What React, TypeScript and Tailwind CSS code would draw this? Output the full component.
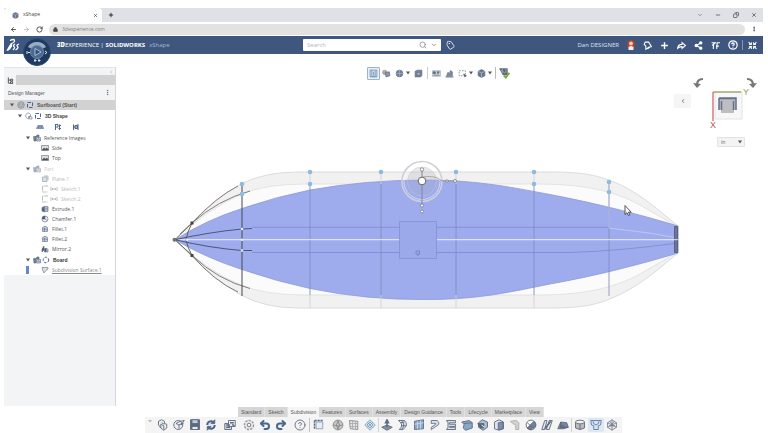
import type { ReactNode } from 'react'
import {
  ArrowLeft,
  ArrowRight,
  ChevronDown,
  ChevronLeft,
  CircleHelp,
  Copy,
  EllipsisVertical,
  Lock,
  Minus,
  Plus,
  Redo2,
  RotateCw,
  Search,
  Share2,
  Tag,
  Undo2,
  X,
} from 'lucide-react'

type Row = {
  label: string
  indent: string
  icons: string[]
  caret?: boolean
  tone?: string
  active?: boolean
  marker?: boolean
}

const TREE: Row[][] = [
  [{ label: 'Surfboard (Start)', indent: 'pl-1', icons: ['product', 'frame'], caret: true, tone: "font-bold font-['Liberation_Sans',sans-serif] text-[#555]", active: true }],
  [{ label: '3D Shape', indent: 'pl-3', icons: ['shape', 'frame'], caret: true, tone: "font-bold font-['Liberation_Sans',sans-serif] text-[#444]" }],
  [
    { label: 'Reference Images', indent: 'pl-5', icons: ['folder'], caret: true },
    { label: 'Side', indent: 'pl-7', icons: ['image'] },
    { label: 'Top', indent: 'pl-7', icons: ['image'] },
  ],
  [
    { label: 'Part', indent: 'pl-5', icons: ['folder'], caret: true, tone: 'text-[#aaa] opacity-60' },
    { label: 'Plane.1', indent: 'pl-7', icons: ['plane'], tone: 'text-[#999] opacity-70' },
    { label: 'Sketch.1', indent: 'pl-7', icons: ['sketch', 'hidden'], tone: 'text-[#999] opacity-70' },
    { label: 'Sketch.2', indent: 'pl-7', icons: ['sketch', 'hidden'], tone: 'text-[#999] opacity-70' },
    { label: 'Extrude.1', indent: 'pl-7', icons: ['extrude'] },
    { label: 'Chamfer.1', indent: 'pl-7', icons: ['chamfer'] },
    { label: 'Fillet.1', indent: 'pl-7', icons: ['fillet'] },
    { label: 'Fillet.2', indent: 'pl-7', icons: ['fillet'] },
    { label: 'Mirror.2', indent: 'pl-7', icons: ['mirror'] },
  ],
  [
    { label: 'Board', indent: 'pl-5', icons: ['folder', 'dashed'], caret: true, tone: "font-bold font-['Liberation_Sans',sans-serif] text-[#333]" },
    { label: 'Subdivision Surface.1', indent: 'pl-7', icons: ['subd'], tone: 'text-[#8a8a8a] underline', marker: true },
  ],
]

const TABS = [
  'Standard',
  'Sketch',
  'Subdivision',
  'Features',
  'Surfaces',
  'Assembly',
  'Design Guidance',
  'Tools',
  'Lifecycle',
  'Marketplace',
  'View',
]

// '|' and '.' are dividers, ' ' only a gap
const COMMANDS = [
  'new', 'open', 'save', 'sync', ' ', 'import', ' ', 'settings', 'undo', 'redo', ' ', 'help', '|',
  'box', ' ', 'sphere', 'cage', 'quad', '.', 'extrudeUp', 'bend', 'face', 'fillhole', 'bridge', 'thicken',
  'cubeCut', 'insert', 'crease', 'symmetry', 'offset', 'split', '.', 'cylinder', 'boxmode', 'mesh',
]

const GLYPHS: Record<string, ReactNode> = {
  product: <><circle cx="8" cy="8" r="6.5" /><path d="M8 4l4 2v4l-4 2-4-2V6zM8 8v4M4 6l4 2 4-2" strokeWidth=".8" /></>,
  frame: <path d="M3 3h10v10H3zM6 3h4M6 13h4" stroke="#47659a" strokeWidth="2" strokeDasharray="7 3" />,
  dashed: <circle cx="8" cy="8" r="5.5" stroke="#47659a" strokeWidth="2" strokeDasharray="5 2.5" />,
  shape: <><path d="M5 2a6 6 0 0 0 0 11l2 1V9h4V5a6 6 0 0 0-6-3z" /><path d="M9 9l5 1v4H9z" /></>,
  folder: <><path d="M1 5h5l2-3h4v4H6v8H2z" fill="#6f7f95" /><path d="M7 7h8v7H7z" fill="#c5d2e2" /><path d="M9 12l2-3 2 3" /></>,
  image: <><path d="M1 3h14v10H1z" fill="#ddd" /><path d="M2 12l4-4 3 2 3-2 3 4z" fill="#444" /></>,
  plane: <><path d="M3 4h9v9H3z" fill="#c5d2e2" /><path d="M6 2h8v9" /></>,
  sketch: <path d="M14 2H3v12h11" strokeDasharray="9 2" />,
  hidden: <path d="M2 4v8M14 4v8M5 8h6M6 6l-2 2 2 2M10 6l2 2-2 2" />,
  extrude: <><path d="M2 5l5-2v11l-5-2z" fill="#516178" /><path d="M7 3h7v10H7z" fill="#b0bfd4" /><path d="M9 8h5" /></>,
  chamfer: <><circle cx="8" cy="8" r="6" fill="#eee" /><path d="M8 8V2a6 6 0 0 0-6 6z" fill="#4b5b74" /><path d="M8 8l4 3" /></>,
  fillet: <><path d="M3 5q5-5 10 0v8H3z" fill="#c3cedd" /><path d="M3 8h7M7 6v7M10 9h3" /></>,
  mirror: <><path d="M2 14V8l4-6v8zM7 14h3V7H7z" fill="#4b5b74" /><path d="M11 6l3 3v5h-3z" fill="#b9c9de" /></>,
  subd: <path d="M2 3h12v3l-4 3-4 5-2-4z" fill="#ddd" />,
  new: <><path d="M2 3l4-2 4 2v3l3 1v5l-4 3-4-3-3-4z" fill="#eceff3" /><path d="M6 5l4 2M5 12V7l4 2v5" /></>,
  open: <><circle cx="7" cy="8" r="6" fill="#eceff3" /><path d="M4 6l4 2v5M8 8l5-3 2-3-5 1-6 3" /><path d="M10 8l4-2" /></>,
  save: <><path d="M2 1h12v13H2z" fill="#5c6980" /><path d="M4 1h8v5H4z" fill="#bccde2" /><path d="M4 10h8v4H4z" fill="#e7ebf0" /></>,
  sync: <><path d="M3 3h10v10H3z" fill="#dfe6ee" stroke="none" /><path d="M3 8a5 5 0 0 1 9-3M13 8a5 5 0 0 1-9 3" stroke="#466489" strokeWidth="2.5" /><path d="M13 1v5H8zM3 15v-5h5z" fill="#466489" /></>,
  import: <><path d="M1 6h9v8H1z" fill="#cfd8e2" /><path d="M6 2h9v8H6z" fill="#eceff3" /><path d="M3 8h5M3 11h5M8 5h5M11 7l3 3" strokeWidth="2" /></>,
  settings: <><circle cx="8" cy="8" r="6" strokeDasharray="3 1.5" strokeWidth="2" stroke="#999" /><circle cx="8" cy="8" r="2.5" /></>,
  box: <><path d="M4 4h9v9H4z" fill="#e4ecf5" stroke="#8b9cb3" /><path d="M2 2v12M2 2h12" strokeWidth="2" strokeDasharray="3 1" /></>,
  sphere: <><circle cx="8" cy="8" r="6.5" fill="#c8c8c8" stroke="#888" /><path d="M2 8q6 3 12 0M8 2q-4 6 0 12M8 2q4 6 0 12" stroke="#888" /></>,
  cage: <><path d="M2 2l11 1v11L3 13z" fill="#e5e5e5" stroke="#888" /><path d="M6 2v11M10 3v10M2 6h11M3 10h10" stroke="#aaa" /></>,
  quad: <path d="M8 1l7 7-7 7-7-7zM4.500 4.500l7 7M11.500 4.500l-7 7M8 4l4 4-4 4-4-4z" fill="#cfe0f0" stroke="#6d8cab" strokeWidth=".9" />,
  extrudeUp: <><path d="M1 11l7-3 7 3-7 4z" fill="#8192aa" /><path d="M8 11V2M6 5l2-4 2 4z" strokeWidth="2" /></>,
  bend: <path d="M2 2h8q6 6-2 12H3q7-6-1-12zM6 2q6 6 0 12M10 4l-5 1M12 9H6" fill="#dfe8f2" />,
  face: <><path d="M2 3l12-2v12L2 14z" fill="#8fa8ca" /><path d="M6 3v10M10 2v11M2 7l12-2" stroke="#c9d7e9" /></>,
  fillhole: <path d="M3 2h8q5 5-2 8l-6 4v-3l6-4q2-2-6-1z" fill="#dfe5ed" />,
  bridge: <path d="M2 2h12v3H6v2h8v3H6v1h8v3H2l2-3V5z" fill="#d5dde7" />,
  thicken: <><path d="M1 4l10-2 4 3v7l-9 3-3-3 1-5z" fill="#8ba5c9" /><path d="M4 6l11-1" /></>,
  cubeCut: <><path d="M2 5l5-4 7 3v7l-6 4-6-4z" fill="#a9bdd6" /><path d="M1 6h8v6H4z" fill="#596679" /><path d="M6 8l4 3" stroke="#fff" /></>,
  insert: <><path d="M2 4l6-3 6 3v9l-6 2-6-2z" fill="#dfe5ec" /><path d="M7 5l6-1v9l-6 1z" fill="#7790b4" /></>,
  crease: <path d="M2 3l8-1 3 3v9h-4V8L5 6z" fill="#d3d3d3" stroke="#aaa" />,
  symmetry: <><circle cx="8" cy="8" r="6.5" fill="#fff" /><path d="M3 12L12 3q4 4 1 8zM3 12q4 3 6 2l2-5z" fill="#6f83a2" /><path d="M3 5l9 8" /></>,
  offset: <><path d="M5 2h3L5 14H1zM11 2h4l-4 12H7z" fill="#dfe6ee" /><path d="M13 3L5 13" strokeWidth="2" /></>,
  split: <><path d="M1 13l4-9 8 1 2 6-6 2z" fill="#7389aa" /><path d="M5 4v7l10 0M4 12l5-4" strokeWidth="2" /></>,
  cylinder: <><path d="M2 4v8q6 4 12 0V4" fill="#bbb" /><ellipse cx="8" cy="4" rx="6" ry="2.500" fill="#eee" /><path d="M8 7v7" /></>,
  boxmode: <><path d="M1 2h14l-1 6-3 1v5H5V9L2 8z" fill="#d6e5f4" stroke="#5a7da3" /><path d="M4 3q0 4 4 5 4-1 4-5" stroke="#5a7da3" /></>,
  mesh: <path d="M8 1l6 4v6l-6 4-6-4V5zM8 1v14M2 5l12 6M14 5L2 11M5 3l3 4 3-4M4 9h8" fill="#e5e5e5" strokeWidth=".9" />,
  planeV: <path d="M2 2h12v12H2zM5 3v10M8 5v6M11 3v10M5 13h6" fill="#dbe8f5" stroke="#55799d" />,
  layers: <><circle cx="5" cy="6" r="4" fill="#aaa" stroke="#999" /><path d="M6 6l7-1 1 7-7 2z" fill="#8a94a3" /></>,
  globe: <><circle cx="8" cy="8" r="6" fill="#71839c" /><path d="M8 2v12M2 8h12" stroke="#a5b3c6" /></>,
  solid: <><path d="M2 4l4-2h8v10l-3 2H2z" fill="#73849d" /><path d="M5 6h6v5H5z" fill="#a9b7c9" /></>,
  grid: <><path d="M1 3h14v10H1z" fill="#c9d0d8" stroke="#aab" /><path d="M2 5h4v3H2zM9 5h4l-3 4M3 11h10" fill="#54657c" /></>,
  measure: <><path d="M3 12l2-6 4 2V3l4 2v7z" fill="#7d8ca3" /><path d="M1 14h14" strokeWidth="2" /></>,
  select: <><path d="M2 3h11v9H2z" strokeDasharray="3 2" /><path d="M10 9l5 3-3 2z" fill="#555" /></>,
  cube: <><path d="M2 4l6-3 6 3v8l-6 3-6-3z" fill="#66778f" /><path d="M2 4l6 3 6-3M8 7v8" stroke="#b8c6d7" /></>,
  check: <><path d="M1 1h11v9H6z" fill="#59677b" /><path d="M3 3l6 5M5 1v6M10 1v6" stroke="#a4afbe" /><path d="M7 11l3 3 5-7" stroke="#76a82a" strokeWidth="2.500" /></>,
  plane1: <><path d="M1 11l3-6h9l2 6z" fill="#94abc9" stroke="#4e6788" /><path d="M5 6v4M8 6v4M11 6v4" /></>,
  plane2: <path d="M3 2v12M3 3h5v5H3M11 3v11M9 11h5M10 5h4" stroke="#4e6788" strokeWidth="2" />,
  plane3: <path d="M3 3v11M12 2v12M3 8h9M6 5h5v6H6z" stroke="#4e6788" strokeWidth="2" />,
}

function Glyph({ name, className = 'size-2' }: { name: string; className?: string }) {
  if (name === 'undo') return <Undo2 className={className} stroke="#46688e" strokeWidth={4} />
  if (name === 'redo') return <Redo2 className={className} stroke="#46688e" strokeWidth={4} />
  if (name === 'help') return <CircleHelp className={className} stroke="#6b7a8c" strokeWidth={2} />
  return (
    <svg viewBox="0 0 16 16" className={className + ' shrink-0'} fill="none" stroke="#606c7c" strokeWidth="1.2" aria-hidden="true">
      {GLYPHS[name]}
    </svg>
  )
}

function Caret({ className = '' }: { className?: string }) {
  return (
    <svg viewBox="0 0 8 8" className={'size-1 shrink-0 ' + className} fill="#555" aria-hidden="true">
      <path d="M0 1h8L4 7z" />
    </svg>
  )
}

function BrowserChrome() {
  return (
    <>
      <div className="flex h-[14px] items-stretch bg-[#dee1e6]">
        <div className="flex w-[98px] items-center rounded-t bg-white pr-1 pl-2 text-[5px] text-[#444]">
          <Glyph name="cube" className="mr-1 size-[7px]" />
          <span className="flex-1">xShape</span>
          <button type="button" aria-label="Close tab">
            <X className="size-[5px]" strokeWidth={3} />
          </button>
        </div>
        <button type="button" aria-label="New tab" className="ml-1.5">
          <Plus className="size-[6px]" strokeWidth={3} />
        </button>
        <div className="ml-auto flex items-center gap-3 pr-1.5 text-[#555]">
          <button type="button" aria-label="Search tabs"><ChevronDown className="size-[6px]" /></button>
          <button type="button" aria-label="Minimize"><Minus className="size-[6px]" strokeWidth={3} /></button>
          <button type="button" aria-label="Restore"><Copy className="size-[6px] -scale-x-100" strokeWidth={3} /></button>
          <button type="button" aria-label="Close"><X className="size-[6px]" strokeWidth={3} /></button>
        </div>
      </div>
      <div className="flex h-[14px] items-center gap-1.5 pr-1.5 pl-1.5 text-[#444]">
        <button type="button" aria-label="Back"><ArrowLeft className="size-[7px]" strokeWidth={3} /></button>
        <button type="button" aria-label="Forward" className="text-[#bbb]"><ArrowRight className="size-[7px]" strokeWidth={3} /></button>
        <button type="button" aria-label="Reload"><RotateCw className="size-[7px]" strokeWidth={3} /></button>
        <div className="flex h-[11px] flex-1 items-center gap-1 rounded-full bg-[#e2e2e3] px-1">
          <Lock className="size-[5px]" fill="#444" strokeWidth={3} />
          <input
            aria-label="Address"
            defaultValue="3dexperience.com"
            className="flex-1 bg-transparent text-[5px] leading-[8px] text-[#7d7d7d] outline-none"
          />
        </div>
        <button type="button" aria-label="Browser menu"><EllipsisVertical className="size-[6px]" strokeWidth={3} /></button>
      </div>
    </>
  )
}

function Compass() {
  return (
    <button type="button" aria-label="Compass" className="absolute top-0.5 left-[19px] z-10">
      <svg viewBox="0 0 28 28" className="size-7">
        <circle cx="14" cy="14" r="13.5" fill="#1f3a5f" stroke="#2c4d79" />
        <path d="M5 9a10.500 10.500 0 0 1 18 0l-4 2a6 6 0 0 0-10 0z" fill="#8398b5" />
        <path d="M5 9a10.500 10.500 0 0 1 18 0l-3 1q-6-5-12 0z" fill="#b5c1d1" opacity=".5" />
        <circle cx="14" cy="14" r="6.5" fill="#4b6b94" stroke="#6e89ab" />
        <path d="M12 10.500l6 3.500-6 3.500z" fill="#2e4c75" stroke="#c7d3e2" strokeWidth=".8" />
        <path d="M4 13v3M5 14.500h2M22 13l2 1.500-2 1.500M11 22.500h2.500M15 22.500h2.500M12 21v3M16 21v3" stroke="#dfe7f1" fill="none" />
      </svg>
    </button>
  )
}

function Header() {
  return (
    <header className="relative flex h-[18px] items-center bg-[#3f577f] text-[6px] leading-[8px] text-white">
      <a href="#home" aria-label="Home" className="ml-0.5">
        <svg viewBox="0 0 26 28" className="size-[14px]" fill="none" stroke="#fff" strokeWidth="2.600">
          <path d="M7 5q8-4 9 0t-8 7M2 24q8-15 8-10t-7 10zM17 12q-5 3-2 5t-2 7M25 12q-6 2-3 5t-4 7" />
        </svg>
      </a>
      <Compass />
      <div className="ml-[37px] flex gap-1">
        <span><b className="font-black">3D</b>EXPERIENCE | <b>SOLIDWORKS</b></span>
        <span className="text-[#a9b9d2]">xShape</span>
      </div>
      <form role="search" className="absolute left-[299px] flex h-3 w-[138px] items-center rounded-[1px] bg-white pr-1 pl-1">
        <input aria-label="Search" placeholder="Search" className="min-w-0 flex-1 text-[#555] outline-none placeholder:text-[#b5b5b5]" />
        <button type="button" aria-label="Run search"><Search className="size-2 text-[#777]" /></button>
        <button type="button" aria-label="Search options" className="ml-1"><ChevronDown className="size-[6px] text-[#777]" strokeWidth={3} /></button>
      </form>
      <button type="button" aria-label="Tags" className="absolute left-[442px]">
        <Tag className="size-[9px] rotate-12" strokeWidth={2} />
      </button>
      <div className="ml-auto flex items-center pr-0.5">
        <span className="mr-1 text-[#dce4f0]">Dan DESIGNER</span>
        <button type="button" aria-label="Profile" className="flex w-4 justify-center">
          <svg viewBox="0 0 16 20" className="h-[10px] w-2">
            <path d="M1 4q7-8 14 0v12H1z" fill="#b8432c" />
            <circle cx="8" cy="7" r="4" fill="#f4c7a5" />
            <path d="M3 20v-6q5-4 10 0v6z" fill="#eee" />
          </svg>
        </button>
        <HeaderButton label="Notifications"><path d="M4 2h6l5 8-5 1-5 4V9L2 6zM8 14l6-4" /></HeaderButton>
        <HeaderButton label="Add"><path d="M8 2v12M2 8h12" strokeWidth="2.500" /></HeaderButton>
        <HeaderButton label="Share"><path d="M1 13q1-7 8-7V3l6 5-6 5v-3q-5 0-8 3z" /></HeaderButton>
        <button type="button" aria-label="Collaborate" className="flex w-[17px] justify-center"><Share2 className="size-[9px]" fill="#fff" strokeWidth={3} /></button>
        <HeaderButton label="Content"><path d="M1 3h8M5 3l-1 11M10 14l1-11h5M9 9h5M2 8l6-5" strokeWidth="2" /></HeaderButton>
        <button type="button" aria-label="Help" className="flex w-[17px] justify-center"><CircleHelp className="size-[10px]" strokeWidth={3} /></button>
        <span className="mx-px h-[10px] w-px bg-[#8194b2]" />
        <HeaderButton label="Exit full screen">
          <path d="M1 2l4 4M15 2l-4 4M1 14l4-4M15 14l-4-4M6 2v4H2M10 2v4h4M6 14v-4H2M10 14v-4h4" />
        </HeaderButton>
      </div>
    </header>
  )
}

function HeaderButton({ label, children }: { label: string; children: ReactNode }) {
  return (
    <button type="button" aria-label={label} className="flex w-[17px] justify-center">
      <svg viewBox="0 0 16 16" className="size-[9px]" fill="none" stroke="#fff" strokeWidth="1.8">
        {children}
      </svg>
    </button>
  )
}

function TreeRow({ row }: { row: Row }) {
  return (
    <button
      type="button"
      className={
        'relative flex h-[10px] w-full items-center gap-px whitespace-nowrap ' +
        row.indent + ' ' + (row.active ? 'bg-[#d2d2d2] ' : '')
      }
    >
      {row.marker ? <span className="absolute top-px left-[22px] h-2 w-[3px] bg-[#6a86c4]" /> : null}
      <span className="flex w-2 shrink-0 justify-center">{row.caret ? <Caret /> : null}</span>
      <span className={'flex items-center gap-px ' + (row.tone ?? 'text-[#555]')}>
        {row.icons.map((name) => (
          <Glyph key={name} name={name} />
        ))}
        <span className="ml-0.5">{row.label}</span>
      </span>
    </button>
  )
}

function DesignManager() {
  return (
    <aside className="mt-[13px] flex w-28 shrink-0 flex-col border-r border-[#d5d7da] bg-[#f3f4f6] text-[5px] leading-[8px]">
      <div className="flex h-2 items-center justify-end border-t border-[#e4e4e4] pr-0.5">
        <ChevronLeft className="size-[4px] text-[#777]" />
      </div>
      <div className="flex h-[10px] bg-[#d2d2d2]">
        <button type="button" aria-label="Tree" className="flex w-3 items-center justify-center bg-[#f3f4f6]">
          <svg viewBox="0 0 16 16" className="size-[7px]" fill="none" stroke="#444" strokeWidth="2">
            <path d="M3 1v13h5M3 7h4M8 5h5v4H8zM8 11h5v4H8z" />
          </svg>
        </button>
      </div>
      <div className="flex h-[15px] items-center justify-between pr-1 pl-1 text-[#555]">
        <h2 className="font-['Liberation_Sans',sans-serif]">Design Manager</h2>
        <button type="button" aria-label="Panel menu"><EllipsisVertical className="size-[7px]" /></button>
      </div>
      <div className="flex flex-col gap-px bg-white">
        {TREE.map((group, i) => (
          <div key={group[0].label}>
            {group.map((row) => (
              <TreeRow key={row.label} row={row} />
            ))}
            {i === 1 ? (
              <div className="flex h-[11px] items-center gap-[10px] pl-8">
                <Glyph name="plane1" />
                <Glyph name="plane2" />
                <Glyph name="plane3" />
              </div>
            ) : null}
          </div>
        ))}
      </div>
    </aside>
  )
}

function ViewToolbar() {
  return (
    <div className="flex h-[14px] items-center justify-center">
      <button type="button" aria-label="Section" className="flex size-[13px] items-center justify-center rounded-[1px] border border-[#9fb4c8] bg-[#e6eef6]">
        <Glyph name="planeV" className="size-[9px]" />
      </button>
      <Tool name="layers" label="Appearance" />
      <Tool name="globe" label="Ambience" caret />
      <Tool name="solid" label="Display mode" />
      <span className="mx-0.5 h-3 w-px bg-[#ccc]" />
      <Tool name="grid" label="Grid" />
      <Tool name="measure" label="Measure" />
      <Tool name="select" label="Selection" caret />
      <Tool name="cube" label="Views" caret />
      <span className="mx-px h-3 w-px bg-[#bbb]" />
      <Tool name="check" label="Validate" />
    </div>
  )
}

function Tool({ name, label, caret }: { name: string; label: string; caret?: boolean }) {
  return (
    <button type="button" aria-label={label} className="flex items-center px-0.5">
      <Glyph name={name} className={name === 'check' ? 'size-[11px]' : 'size-[9px]'} />
      {caret ? <Caret className="ml-0.5" /> : null}
    </button>
  )
}

function ViewCube() {
  return (
    <div className="absolute top-5 right-0 flex items-start">
      <button type="button" aria-label="Collapse view tools" className="mt-5 flex h-[14px] w-[17px] items-center justify-center rounded-[1px] bg-[#f5f5f5]">
        <ChevronLeft className="size-[6px] text-[#555]" strokeWidth={3} />
      </button>
      <div className="flex w-[72px] flex-col items-center">
        <svg viewBox="0 0 72 60" className="h-[60px] w-[72px]" fill="none">
          <path d="M12 5q-6 0-6 6" stroke="#777" strokeWidth="2.200" />
          <path d="M2 9l4 5 4-4z" fill="#777" />
          <path d="M56 5q6 0 6 6" stroke="#777" strokeWidth="2.200" />
          <path d="M58 10l4 4 4-5z" fill="#777" />
          <path d="M24 18h27v27H24z" fill="#f7f7f7" stroke="#e3e3e3" />
          <path d="M28 24h17v12h-2v3H30v-3h-2z" fill="#bdbdc2" />
          <path d="M28 24h17v12M28 24v12M28 24.500h17M30.500 27v9M42.500 27v9" stroke="#63718a" strokeWidth="1.500" />
          <path d="M22 18h28" stroke="#8f9a55" strokeWidth="1.200" />
          <path d="M22 18v29" stroke="#c45d60" strokeWidth="1.200" />
          <text x="52" y="21" fill="#9a9a50" fontSize="9" fontFamily="Liberation Sans">Y</text>
          <text x="19" y="54" fill="#b8565a" fontSize="9" fontFamily="Liberation Sans">X</text>
        </svg>
        <div className="relative mt-[3px] ml-2 flex">
          <select aria-label="Units" defaultValue="in" className="h-[10px] w-7 appearance-none rounded-[1px] border border-[#e3e3e3] bg-[#f3f3f3] pl-[3px] text-[5px] leading-[8px] text-[#666]">
            <option>in</option>
            <option>mm</option>
          </select>
          <Caret className="pointer-events-none absolute top-[3px] right-[3px]" />
        </div>
      </div>
    </div>
  )
}

const STATIONS = [310, 381, 456, 534, 609]
const CONTROL_POINTS = [
  [242, 184], [242, 194], [310, 172], [310, 184], [381, 172],
  [456, 172], [534, 172], [534, 184], [609, 182], [609, 192],
]

// everything in the model is mirrored about y = 239.7
function Board() {
  return (
    <svg viewBox="116 150 647 170" className="mt-[70px] w-full" fill="none" role="img" aria-label="Surfboard model, top view">
      <path
        d="M175 239.700C195 219 215 199 242 183.500Q265 172 298 172H548C585 172 598 175 621 185C645 197 663 214 678 226V253C663 265 645 282 621 294C598 305 585 308 548 308H298Q265 308 242 295.500C215 280 195 260 175 239.700z"
        fill="#f1f1f1"
        stroke="#dcdcdc"
      />
      <path
        d="M175 239.700Q207 209 242 194Q266 184 305 184H535C582 184 612 190 640 205L678 227V252L640 274C612 289 582 295 535 295H305Q266 295 242 285.500Q207 271 175 239.700z"
        fill="#fbfbfb"
        stroke="#dedede"
        strokeWidth=".8"
      />
      <path
        d="M175 239.700Q206 220 242 208.500Q275 197 310 190Q366 180 425 180C480 180 520 189 550 194.500C595 203 638 214 678 226V253C638 265 595 276 550 284C510 292 480 299.500 425 299.500Q366 300 310 288.500Q275 281 242 269.500Q206 258 175 239.700z"
        fill="#9eacee"
        stroke="#8c99d3"
        strokeWidth=".8"
      />
      {STATIONS.map((x) => (
        <path key={x} d={`M${x} 184V${x === 609 ? 296 : 295}`} stroke="#7f8cc0" strokeWidth=".9" />
      ))}
      {STATIONS.map((x) => (
        <path key={x} d={x === 609 ? 'M609 182v10M609 273v23' : `M${x} 172v12M${x} 295v13`} stroke="#cfcfcf" strokeWidth=".8" />
      ))}
      <path d="M252 227.300H609M252 252.500H570Q620 251 678 243" stroke="#7d8ac8" strokeWidth=".8" />
      <path d="M609 206v22l40 5 29 5" stroke="#c5ccef" strokeWidth=".8" />
      <path d="M178 239.700H400M436 239.700H678" stroke="#dde2f7" strokeWidth="1.200" />
      <path d="M399.500 221.500h37v37h-37z" fill="#9ba8ea" stroke="#8290cf" strokeWidth=".8" />
      <path d="M416 251h3.500v3H416zM418 254v2" stroke="#6c79ba" strokeWidth=".7" />

      {/* nose cage */}
      <g stroke="#56524f" strokeWidth=".9">
        <path d="M175 239.700L192 223Q216 197 238 186M175 239.700L192 255.500Q214 281 238 292" stroke="#77716c" />
        <path d="M180 234L192 223Q218 200 250 191M175 239.700L192 255.500Q218 280 250 288.500" stroke="#77716c" />
        <path d="M175 239.700Q210 232 242 229L252 228.500M175 239.700Q210 248 242 250.500H252" stroke="#454b68" />
        <path d="M192 223L188 232L186 239.700L188 247L192 255.500" />
        <path d="M242 184V296" stroke="#454850" strokeWidth="1" />
      </g>
      <path d="M190.500 221.500h3v3h-3zM190.500 254h3v3h-3z" fill="#444" />
      <circle cx="174.500" cy="239.700" r="2" fill="#77716c" />
      <g fill="#e8ecff">
        <circle cx="187" cy="239.700" r="1.300" />
        <circle cx="242" cy="229" r="1.300" />
        <circle cx="242" cy="239.700" r="1.300" />
        <circle cx="242" cy="250.500" r="1.300" />
      </g>
      <path d="M674.500 226.500h3v26h-3z" fill="#6c7596" stroke="#5a6280" />
      <path d="M672 239.700h6" stroke="#dde2f7" />
      {CONTROL_POINTS.map(([x, y]) => (
        <circle key={`${x}-${y}`} cx={x} cy={y} r="2.300" fill="#8bbbe0" />
      ))}

      {/* manipulator */}
      <circle cx="422" cy="181.500" r="20" stroke="#cfd0d4" strokeWidth="1.600" />
      <circle cx="422" cy="181.500" r="18" stroke="#fff" strokeOpacity=".5" />
      <circle cx="422" cy="181.500" r="14.500" fill="#aaadb9" fillOpacity=".25" stroke="#c3c4c9" strokeWidth=".5" />
      <path d="M422 171v36" stroke="#7d86ad" />
      <path d="M422 177q14-2 20 4h12" stroke="#9b9b9b" strokeWidth=".8" />
      <g fill="#fff" stroke="#777" strokeWidth=".8">
        <circle cx="422" cy="169.500" r="1.700" />
        <circle cx="422" cy="205.500" r="1.500" />
        <circle cx="422" cy="211.500" r="1.500" />
        <circle cx="447" cy="181" r="1.200" />
        <circle cx="455" cy="181" r="1.500" />
      </g>
      <circle cx="422" cy="181" r="3.800" fill="#fff" stroke="#666" />
      <path d="M625 205.500v9l2-1.800 1.600 3 1.300-.8-1.500-2.700h2.800z" fill="#fff" stroke="#444" strokeWidth=".9" />
    </svg>
  )
}

function CommandDock() {
  return (
    <footer className="mx-auto mt-px flex flex-col">
      <div role="tablist" className="ml-[93px] flex self-start bg-[#d6d6d6] font-['Liberation_Sans',sans-serif] text-[5px] leading-[10px] text-[#555]">
        {TABS.map((tab) => (
          <button
            key={tab}
            type="button"
            role="tab"
            aria-selected={tab === 'Subdivision'}
            className={'px-[3px] ' + (tab === 'Subdivision' ? 'bg-[#f5f5f5]' : 'border-r border-[#e2e2e2]')}
          >
            {tab}
          </button>
        ))}
      </div>
      <div className="flex h-4 items-center bg-[#f4f4f5] pr-0.5">
        <button type="button" aria-label="Collapse toolbar" className="flex w-[10px] justify-center self-start pt-0.5">
          <ChevronDown className="size-[4px]" strokeWidth={3} />
        </button>
        {COMMANDS.map((name, i) => {
          if (name === ' ') return <span key={i} className="w-[3px]" />
          if (name === '|') return <span key={i} className="mx-px h-[14px] w-px bg-[#c4c4c4]" />
          if (name === '.') return <span key={i} className="h-[14px] w-px bg-[#d4d4d4]" />
          return (
            <button
              key={i}
              type="button"
              aria-label={name}
              className={'flex h-[14px] w-4 items-center justify-center ' + (name === 'boxmode' ? 'bg-[#dfe8f1]' : '')}
            >
              <Glyph name={name} className="size-3" />
            </button>
          )
        })}
      </div>
    </footer>
  )
}

export default function App() {
  return (
    <div className="flex min-h-screen flex-col bg-white pt-2 pr-[5px] pl-1 font-['Open_Sans',sans-serif]">
      <BrowserChrome />
      <Header />
      <main className="flex flex-1">
        <DesignManager />
        <section className="relative min-w-0 flex-1 pt-3">
          <ViewToolbar />
          <ViewCube />
          <Board />
        </section>
      </main>
      <CommandDock />
    </div>
  )
}
